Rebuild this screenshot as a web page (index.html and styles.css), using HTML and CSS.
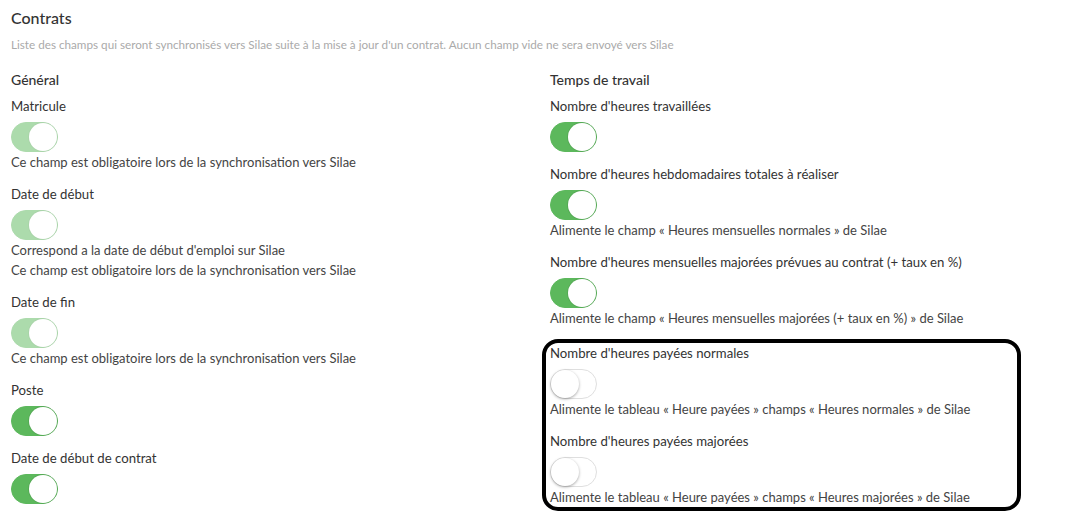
FILE: index.html
```html
<!DOCTYPE html>
<html lang="fr">
<head>
    <meta charset="UTF-8">
    <meta name="viewport" content="width=device-width, initial-scale=1.0">
    <title>Contrats - Synchronisation Silae</title>
    <link rel="stylesheet" href="styles.css">
</head>
<body>
    <div class="page">
        <h1>Contrats</h1>
        <p class="subtitle">Liste des champs qui seront synchronisés vers Silae suite à la mise à jour d'un contrat. Aucun champ vide ne sera envoyé vers Silae</p>

        <div class="columns">
            <div class="column">
                <h2>Général</h2>

                <div class="field">
                    <div class="label">Matricule</div>
                    <div class="switch on disabled"><span class="knob"></span></div>
                    <div class="help">Ce champ est obligatoire lors de la synchronisation vers Silae</div>
                </div>

                <div class="field">
                    <div class="label">Date de début</div>
                    <div class="switch on disabled"><span class="knob"></span></div>
                    <div class="help">Correspond a la date de début d'emploi sur Silae</div>
                    <div class="help">Ce champ est obligatoire lors de la synchronisation vers Silae</div>
                </div>

                <div class="field">
                    <div class="label">Date de fin</div>
                    <div class="switch on disabled"><span class="knob"></span></div>
                    <div class="help">Ce champ est obligatoire lors de la synchronisation vers Silae</div>
                </div>

                <div class="field">
                    <div class="label">Poste</div>
                    <div class="switch on"><span class="knob"></span></div>
                </div>

                <div class="field">
                    <div class="label">Date de début de contrat</div>
                    <div class="switch on"><span class="knob"></span></div>
                </div>
            </div>

            <div class="column">
                <h2>Temps de travail</h2>

                <div class="field">
                    <div class="label">Nombre d'heures travaillées</div>
                    <div class="switch on"><span class="knob"></span></div>
                </div>

                <div class="field">
                    <div class="label">Nombre d'heures hebdomadaires totales à réaliser</div>
                    <div class="switch on"><span class="knob"></span></div>
                    <div class="help">Alimente le champ « Heures mensuelles normales » de Silae</div>
                </div>

                <div class="field">
                    <div class="label">Nombre d'heures mensuelles majorées prévues au contrat (+ taux en %)</div>
                    <div class="switch on"><span class="knob"></span></div>
                    <div class="help">Alimente le champ « Heures mensuelles majorées (+ taux en %) » de Silae</div>
                </div>

                <div class="highlight">
                    <div class="field">
                        <div class="label">Nombre d'heures payées normales</div>
                        <div class="switch"><span class="knob"></span></div>
                        <div class="help">Alimente le tableau « Heure payées » champs « Heures normales » de Silae</div>
                    </div>

                    <div class="field">
                        <div class="label">Nombre d'heures payées majorées</div>
                        <div class="switch"><span class="knob"></span></div>
                        <div class="help">Alimente le tableau « Heure payées » champs « Heures majorées » de Silae</div>
                    </div>
                </div>
            </div>
        </div>
    </div>
</body>
</html>
```

FILE: styles.css
```css
body {
    margin: 0;
    font-family: 'Lato', 'Open Sans', sans-serif;
    background: #ffffff;
    color: #333333;
}

.page {
    padding: 8px 11px 0 11px;
}

h1 {
    margin: 0;
    font-size: 16px;
    font-weight: 500;
    line-height: 20px;
    color: #333333;
}

.subtitle {
    margin: 9px 0 0 0;
    font-size: 11.7px;
    line-height: 14px;
    color: #aaaaaa;
}

.columns {
    display: grid;
    grid-template-columns: 539px 1fr;
    margin-top: 20px;
}

h2 {
    margin: 0 0 8px 0;
    font-size: 14px;
    font-weight: 500;
    line-height: 18px;
    color: #333333;
}

.field {
    margin-bottom: 13px;
}

.label {
    font-size: 13.2px;
    line-height: 18px;
    color: #333333;
    margin-bottom: 7px;
}

.help {
    font-size: 13px;
    line-height: 20px;
    color: #444444;
}

.switch {
    position: relative;
    width: 47px;
    height: 30px;
    box-sizing: border-box;
    border: 1px solid #dfdfdf;
    border-radius: 15px;
    background: #ffffff;
}

.switch .knob {
    position: absolute;
    top: 0;
    left: 0;
    width: 28px;
    height: 28px;
    border-radius: 50%;
    background: #ffffff;
    box-shadow: 0 1px 3px rgba(0, 0, 0, 0.35);
}

.switch.on {
    background: #5cb85c;
    border-color: #5cb85c;
}

.switch.on .knob {
    left: auto;
    right: 0;
    box-shadow: 0 0 0 1px rgba(0, 0, 0, 0.08);
}

.switch.disabled {
    opacity: 0.5;
}

.highlight {
    margin: -2px 35px 0 -8px;
    padding: 1px 0 0 4px;
    border: 4px solid #000000;
    border-radius: 16px;
}

.highlight .field:last-child {
    margin-bottom: 0;
}
```
